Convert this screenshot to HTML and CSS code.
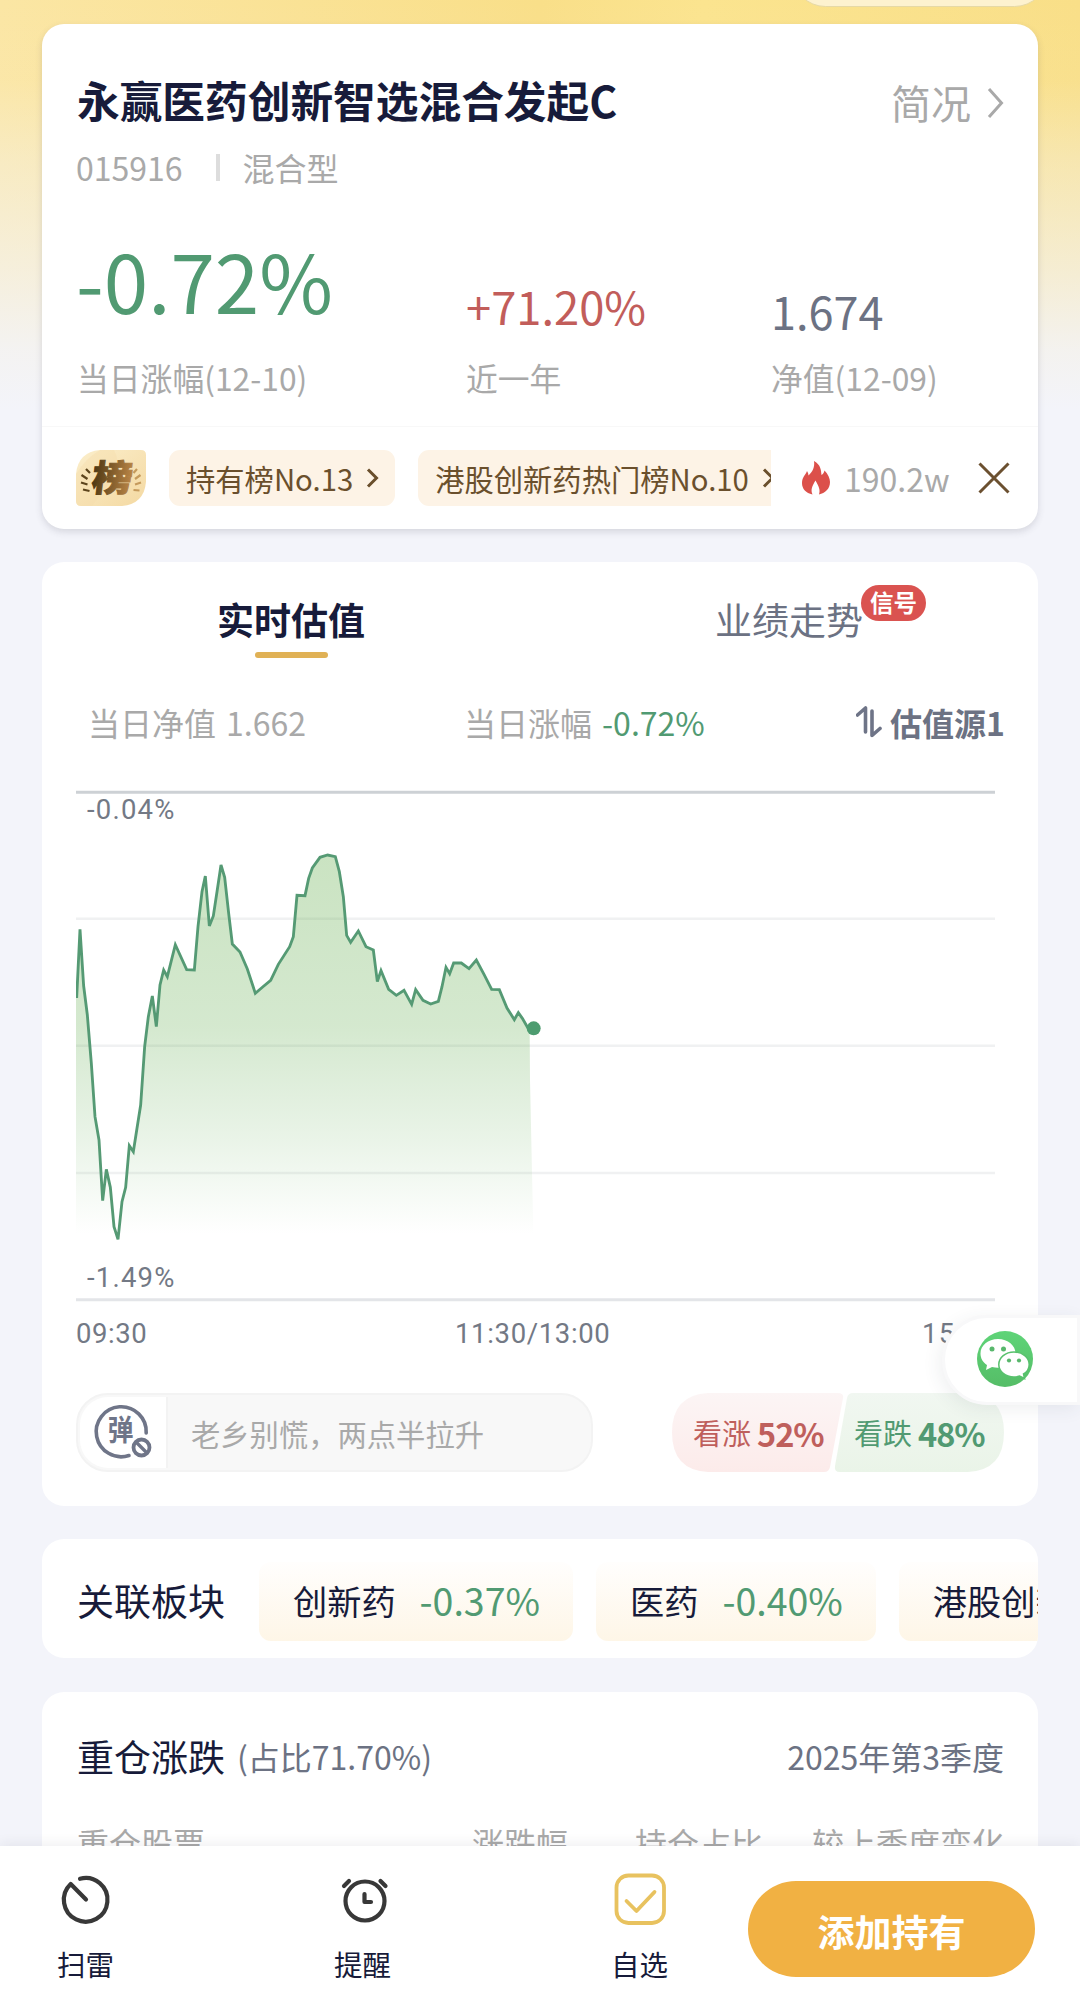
FILE: index.html
```html
<!DOCTYPE html>
<html lang="zh-CN">
<head>
<meta charset="utf-8">
<title>永赢医药创新智选混合发起C</title>
<link rel="stylesheet" href="styles.css">
</head>
<body>
<div class="top-pill"></div>
<main class="page">
  <section class="card summary">
    <header class="title-row">
      <h1 class="title">永赢医药创新智选混合发起C</h1>
      <div class="brief">简况
        <svg class="brief-arrow" width="17" height="32" viewBox="0 0 17 32"><path d="M2 2 L14.5 16 L2 30" fill="none" stroke="#a9a9a9" stroke-width="3"/></svg>
      </div>
    </header>
    <div class="meta"><span>015916</span><i class="meta-sep"></i><span>混合型</span></div>
    <div class="stats">
      <div class="stat"><div class="value big green">-0.72%</div><div class="label">当日涨幅(12-10)</div></div>
      <div class="stat"><div class="value year red">+71.20%</div><div class="label">近一年</div></div>
      <div class="stat"><div class="value nav">1.674</div><div class="label">净值(12-09)</div></div>
    </div>
    <div class="ranks">
      <div class="rank-badge">
        <svg width="70" height="56" viewBox="0 0 70 56">
          <defs>
            <linearGradient id="gold" x1="0" y1="0" x2="1" y2="1"><stop offset="0" stop-color="#fbeecb"/><stop offset="1" stop-color="#f4d9a2"/></linearGradient>
            <linearGradient id="bronze" x1="0" y1="0" x2="1" y2="0"><stop offset="0" stop-color="#4d3712"/><stop offset="1" stop-color="#bb8647"/></linearGradient>
          </defs>
          <path d="M24 0H65Q70 0 70 5V32Q68 54 46 56H5Q0 56 0 51V24Q2 2 24 0Z" fill="url(#gold)"/>
          <path d="M24 0H38Q44 10 40 24L16 56H5Q0 56 0 51V24Q10 8 24 0Z" fill="#f6dda9" opacity=".4"/>
          <path d="M10 19l4 4M5.500 25l6 4M5 32.500l6.500 2M7 39.500l6.500 1.500" stroke="#5c441c" stroke-width="2.2" fill="none"/>
          <path d="M61 19l-3.500 4M64.500 25l-5.500 4M65 32.500l-6 2M63.500 40.500l-6-.5" stroke="#c59a5c" stroke-width="2.2" fill="none"/>
          <text x="0" y="0" text-anchor="middle" class="badge-char" fill="url(#bronze)" stroke="url(#bronze)" transform="translate(35 40.500) skewX(-7) scale(1.12 1)">榜</text>
        </svg>
      </div>
      <div class="rank-list">
        <span class="rank-chip">持有榜No.13<svg width="13" height="20" viewBox="0 0 13 20"><path d="M2 1.5L10.5 10L2 18.5" fill="none" stroke="#6a4f2c" stroke-width="3"/></svg></span>
        <span class="rank-chip">港股创新药热门榜No.10<svg width="13" height="20" viewBox="0 0 13 20"><path d="M2 1.5L10.5 10L2 18.5" fill="none" stroke="#6a4f2c" stroke-width="3"/></svg></span>
      </div>
      <svg class="flame" width="30" height="34" viewBox="0 0 30 34"><path d="M13 0C20 4 20 9 20.500 14C22 13.500 23 11.500 23.500 9.500C27 13 29 17.500 29 21C29 28 24 32 18 33.500C19.500 29 18 26 14.500 19.500C11 25 9.500 29 11.500 33.500C5 32 1 28 1 22C1 16 5 13.500 6 10C7 11.500 7.500 13 7.500 14.500C11.500 11 14 6 13 0Z" fill="#dc504a"/></svg>
      <span class="heat">190.2w</span>
      <svg class="close" width="32" height="32" viewBox="0 0 32 32"><path d="M1.500 1.500L30.500 30.500M30.500 1.500L1.500 30.500" stroke="#6b5030" stroke-width="3"/></svg>
    </div>
  </section>

  <section class="card estimate">
    <nav class="tabs">
      <div class="tab active">实时估值<i class="tab-line"></i></div>
      <div class="tab"><span class="tab-text">业绩走势<b class="signal">信号</b></span></div>
    </nav>
    <div class="info">
      <div class="pair"><span>当日净值</span><span>1.662</span></div>
      <div class="pair"><span>当日涨幅</span><span class="green">-0.72%</span></div>
      <div class="source">
        <svg width="26" height="32" viewBox="0 0 26 32"><path d="M1.500 9L9.500 2V26M16 5V29.500L24 22.500" fill="none" stroke="#6e7487" stroke-width="3.600" stroke-linejoin="round" stroke-linecap="round"/></svg>估值源1
      </div>
    </div>
    <svg class="chart" width="919" height="580" viewBox="0 0 919 580">
      <defs><linearGradient id="area" gradientUnits="userSpaceOnUse" x1="0" y1="225" x2="0" y2="1362"><stop offset="0" stop-color="#5aa840" stop-opacity=".32"/><stop offset=".45" stop-color="#5aa845" stop-opacity=".26"/><stop offset=".75" stop-color="#5aa84c" stop-opacity=".13"/><stop offset="1" stop-color="#5aa850" stop-opacity="0"/></linearGradient></defs>
      <path d="M0 138.700H919M0 265.700H919M0 393H919" stroke="#f0f1f2" stroke-width="2.500"/>
      <path d="M0 12.300H919" stroke="#cdd1d5" stroke-width="3"/>
      <path d="M0 519.700H919" stroke="#e3e5e8" stroke-width="3"/>
      <g transform="scale(.333333) translate(-48 0)">
        <path fill="url(#area)" d="M48 654L60 448 71 618 82 705 94 850 105 1010 117 1080 128 1262 139 1168 151 1222 162 1340 174 1378 186 1265 197 1222 208 1097 220 1115 231 1045 242 975 254 800 265 710 277 648 289 740 300 615 311 570 322 590 346 494 380 569 403 570 414 440 426 335 436 288 448 438 460 408 471 335 483 255 494 292 506 400 517 492 540 516 562 567 586 640 608 621 632 601 655 553 689 500 700 470 711 346 735 347 746 295 757 264 780 232 803 225 826 230 838 275 850 350 860 466 872 487 895 453 918 500 940 510 952 605 963 572 986 628 1009 646 1032 631 1055 673 1067 629 1089 661 1112 672 1135 664 1146 620 1158 562 1169 581 1181 549 1204 549 1227 566 1249 540 1272 583 1295 628 1318 629 1341 684 1363 719 1375 698 1387 715 1409 750 1410 900 1420 1362H48Z"/>
        <path fill="none" stroke="#559a74" stroke-width="8.500" d="M50 654L60 448 71 618 82 705 94 850 105 1010 117 1080 128 1262 139 1168 151 1222 162 1340 174 1378 186 1265 197 1222 208 1097 220 1115 231 1045 242 975 254 800 265 710 277 648 289 740 300 615 311 570 322 590 346 494 380 569 403 570 414 440 426 335 436 288 448 438 460 408 471 335 483 255 494 292 506 400 517 492 540 516 562 567 586 640 608 621 632 601 655 553 689 500 700 470 711 346 735 347 746 295 757 264 780 232 803 225 826 230 838 275 850 350 860 466 872 487 895 453 918 500 940 510 952 605 963 572 986 628 1009 646 1032 631 1055 673 1067 629 1089 661 1112 672 1135 664 1146 620 1158 562 1169 581 1181 549 1204 549 1227 566 1249 540 1272 583 1295 628 1318 629 1341 684 1363 719 1375 698 1387 715 1402 741 1418 745"/>
        <circle cx="1421" cy="745" r="21" fill="#4d9c70"/>
      </g>
      <g class="axis">
        <text x="11" y="39">-0.04%</text>
        <text x="11" y="507">-1.49%</text>
        <text x="0" y="563" textLength="72">09:30</text>
        <text x="379" y="563" textLength="156">11:30/13:00</text>
        <text x="846" y="563">15:00</text>
      </g>
    </svg>
    <div class="votes">
      <div class="danmaku">
        <div class="danmaku-icon">
          <svg width="62" height="62" viewBox="0 0 62 62">
            <path d="M56.200 32A25 25 0 1 0 39 54.500" fill="none" stroke="#6f7588" stroke-width="3.600" stroke-linecap="round"/>
            <text x="0" y="0" text-anchor="middle" class="dan-char" transform="translate(30.500 40) scale(.95 1.08)">弹</text>
            <circle cx="51.500" cy="46.500" r="8" fill="#fff" stroke="#6f7588" stroke-width="3.800"/>
            <path d="M46 41L57 52" stroke="#6f7588" stroke-width="3.400"/>
          </svg>
        </div>
        <span class="danmaku-text">老乡别慌，两点半拉升</span>
      </div>
      <div class="poll">
        <svg class="poll-bg" width="332" height="79" viewBox="0 0 332 79">
          <defs>
            <linearGradient id="up" x1="0" y1="0" x2="0" y2="1"><stop offset="0" stop-color="#fcf5f5"/><stop offset="1" stop-color="#fcebea"/></linearGradient>
            <linearGradient id="down" x1="0" y1="0" x2="0" y2="1"><stop offset="0" stop-color="#f1f7f1"/><stop offset="1" stop-color="#eaf4e8"/></linearGradient>
          </defs>
          <path d="M36 0H166Q172 0 171 5L158 74Q157 79 152 79H36Q0 77 0 39.500Q0 2 36 0Z" fill="url(#up)"/>
          <path d="M181 0H296Q332 2 332 39.500Q332 77 296 79H168Q162 79 163 73L175 5Q176 0 181 0Z" fill="url(#down)"/>
        </svg>
        <span class="poll-item up">看涨<b>52%</b></span>
        <span class="poll-item down">看跌<b>48%</b></span>
      </div>
    </div>
  </section>

  <section class="card sectors">
    <h2 class="heading">关联板块</h2>
    <div class="sector-chip">创新药<span class="green">-0.37%</span></div>
    <div class="sector-chip">医药<span class="green">-0.40%</span></div>
    <div class="sector-chip">港股创新药</div>
  </section>

  <section class="card holdings">
    <div class="holdings-head">
      <h2 class="heading">重仓涨跌</h2><span class="ratio">(占比71.70%)</span><span class="quarter">2025年第3季度</span>
    </div>
    <div class="columns"><span>重仓股票</span><span>涨跌幅</span><span>持仓占比</span><span>较上季度变化</span></div>
  </section>
</main>

<aside class="share">
  <svg width="56" height="56" viewBox="0 0 56 56">
    <defs><linearGradient id="wx" x1="0" y1="0" x2="0" y2="1"><stop offset="0" stop-color="#5fd478"/><stop offset="1" stop-color="#55bd67"/></linearGradient></defs>
    <circle cx="28" cy="28" r="28" fill="url(#wx)"/>
    <path d="M21 8C11 8 3.500 14.500 3.500 22.500C3.500 27.500 6 31.500 10 34L9 39L15 36C17 36.500 19 36.800 21 36.800C31 36.800 38.500 30.500 38.500 22.500S31 8 21 8Z" fill="#fff"/>
    <path d="M37 21C28.500 21 21.800 26.500 21.800 33.500S28.500 46 37 46C39 46 41 45.600 42.600 45L47.500 47.500L46.500 43C50 41 52.200 37.500 52.200 33.500C52.200 26.500 45.500 21 37 21Z" fill="#fff" stroke="#58c16d" stroke-width="1.500"/>
    <circle cx="15" cy="18" r="2.500" fill="#58b76c"/><circle cx="26.500" cy="18" r="2.500" fill="#58b76c"/>
    <circle cx="32" cy="29.500" r="2.100" fill="#58b76c"/><circle cx="42" cy="29.500" r="2.100" fill="#58b76c"/>
  </svg>
</aside>

<footer class="bottom-bar">
  <div class="action">
    <svg width="56" height="56" viewBox="0 0 56 56"><path d="M22 7.800A21.800 21.800 0 1 1 12.700 13L28 28.500" fill="none" stroke="#383838" stroke-width="4.200" stroke-linecap="round" stroke-linejoin="round"/></svg>
    <span>扫雷</span>
  </div>
  <div class="action">
    <svg width="56" height="56" viewBox="0 0 56 56"><g fill="none" stroke="#383838" stroke-width="4.200" stroke-linecap="round" stroke-linejoin="round"><circle cx="30" cy="30" r="19.500"/><path d="M29.500 23V31H36M9 15L14 10M45.500 10L50.500 15"/></g></svg>
    <span>提醒</span>
  </div>
  <div class="action">
    <svg width="56" height="56" viewBox="0 0 56 56"><g fill="none" stroke="#e8c25f" stroke-width="3.800" stroke-linejoin="round" stroke-linecap="round"><rect x="4.500" y="4.500" width="47.500" height="47.500" rx="12"/><path d="M14.500 30L24.500 40L42.500 21"/></g></svg>
    <span>自选</span>
  </div>
  <button class="add">添加持有</button>
</footer>
</body>
</html>
```
FILE: styles.css
```css
* { box-sizing: border-box; }
body {
  margin: 0;
  height: 2011px;
  overflow: hidden;
  position: relative;
  font-family: "Noto Sans CJK SC", sans-serif;
  font-size: 32px;
  color: #a9a9a9;
  white-space: nowrap;
  background:
    linear-gradient(180deg, rgba(243,244,250,0) 0, rgba(243,244,250,.05) 80px, rgba(243,244,250,.35) 160px, rgba(243,244,250,.65) 270px, rgba(243,244,250,.9) 350px, #f3f4fa 410px),
    linear-gradient(90deg, #fbe6a4 0, #f9df89 50%, #fbe48f 65%, #f9df88 100%);
}
h1, h2 { margin: 0; font-weight: 400; }
.green { color: #519a72; }
.red { color: #c25d5a; }
.top-pill {
  position: absolute;
  left: 792px;
  top: -60px;
  width: 256px;
  height: 67px;
  border-radius: 34px;
  background: #fdf2cf;
  border: 1px solid #e6d9a6;
}
.page { padding: 24px 42px 0; height: 1846px; overflow: hidden; display: flex; flex-direction: column; }
.card { flex: none; background: #fff; border-radius: 22px; margin-bottom: 33px; }

.summary { height: 505px; padding-top: 46px; box-shadow: 0 3px 7px rgba(60,60,80,.16); }
.title-row { display: flex; justify-content: space-between; padding: 0 34px 0 35px; height: 58px; line-height: 58px; }
.title { font-size: 42.7px; font-weight: 700; color: #171b3a; }
.brief { display: flex; align-items: center; gap: 16px; font-size: 40px; padding-top: 5px; }
.brief-arrow { position: relative; top: 1px; }
.meta { display: flex; align-items: center; height: 46px; line-height: 46px; margin-top: 16px; padding-left: 34px; }
.meta-sep { width: 4px; height: 27px; background: #ddd; margin: 0 23px 0 33px; }
.stats { display: grid; grid-template-columns: 389px 305px 1fr; height: 172px; margin-top: 38px; padding-left: 35px; }
.stat { display: flex; flex-direction: column; justify-content: flex-end; }
.label { line-height: 46px; font-size: 31.8px; }
.big { font-size: 80px; line-height: 100px; margin: 0 0 25px -1px; }
.year { font-size: 45.3px; line-height: 60px; margin-bottom: 19px; }
.nav { font-size: 45px; line-height: 60px; margin-bottom: 13px; color: #6c7283; }
.ranks { display: flex; align-items: center; height: 103px; margin-top: 26px; padding: 0 27px 0 34px; border-top: 1px solid #f8f8f8; }
.rank-badge { height: 56px; width: 70px; }
.rank-badge svg { display: block; }
.badge-char { font-size: 36px; font-weight: 900; stroke-width: 1px; }
.rank-list { display: flex; gap: 23px; margin-left: 23px; width: 602px; overflow: hidden; }
.rank-chip { flex: none; display: flex; align-items: center; gap: 13px; height: 56px; padding: 0 16px 0 17px; border-radius: 11px; background: #fdf3e6; color: #6a4f2c; font-size: 29.3px; }
.flame { margin-left: 30px; }
.heat { margin-left: 13px; width: 119px; }
.close { margin-left: 15px; }

.estimate { height: 944px; padding-top: 30px; }
.tabs { display: grid; grid-template-columns: 1fr 1fr; height: 67px; }
.tab { display: flex; flex-direction: column; align-items: center; font-size: 37px; line-height: 54px; color: #6c7283; }
.active { color: #171b3a; font-weight: 700; }
.tab-line { width: 73px; height: 6px; border-radius: 3px; background: #e0b155; margin-top: 6px; }
.tab-text { position: relative; }
.signal { position: absolute; left: 100%; top: -7px; margin-left: -2px; width: 65px; height: 36px; border-radius: 18px; background: #da5350; color: #fff; font-size: 23.5px; line-height: 35px; text-align: center; }
.info { display: flex; height: 46px; line-height: 46px; margin-top: 40px; padding: 0 33px 0 46px; }
.pair { display: flex; gap: 10px; width: 376px; }
.source { display: flex; align-items: center; gap: 8px; margin-left: auto; font-weight: 700; color: #6c7283; }
.chart { display: block; margin: 35px 0 0 34px; }
.axis { font-family: Roboto, sans-serif; font-size: 27.5px; fill: #737985; letter-spacing: 1.2px; }
.votes { display: flex; justify-content: space-between; margin-top: 33px; padding: 0 34px; height: 79px; }
.danmaku { display: flex; width: 517px; border: 2px solid #f3f3f3; border-radius: 32px; background: #f8f8f8; align-items: center; }
.danmaku-icon { width: 88px; height: 71px; margin-left: 2px; border-radius: 28px 0 0 28px; background: #fff; border-right: 2px solid #f3f3f3; padding: 4px 0 0 10px; }
.dan-char { font-size: 27px; font-weight: 700; fill: #6f7588; }
.danmaku-text { font-size: 29.3px; margin-left: 23px; }
.poll { display: grid; grid-template-columns: 160px 172px; width: 332px; }
.poll-bg { grid-area: 1 / 1 / 2 / 3; }
.poll-item { display: flex; align-items: center; gap: 6px; font-size: 29px; line-height: 79px; }
.poll-item b { font-size: 32.500px; letter-spacing: -1px; }
.up { grid-area: 1 / 1; padding-left: 21px; color: #bf5f5c; }
.down { grid-area: 1 / 2; padding-left: 22px; color: #519a72; }

.sectors { display: flex; align-items: center; height: 119px; padding: 0 0 0 35px; overflow: hidden; }
.heading { font-size: 37px; color: #171b3a; }
.sectors .heading { padding-top: 2px; }
.sector-chip { flex: none; display: flex; align-items: center; gap: 24px; margin: 6px 0 0 23px; height: 79px; padding: 0 33px 4px 34px; border-radius: 12px; background: linear-gradient(#fffefd, #fef6e7); color: #171b3a; font-size: 34.2px; }
.sector-chip .green { font-size: 37.500px; }
.heading + .sector-chip { margin-left: 34px; }

.holdings { height: 400px; padding: 37px 34px 0 35px; margin-top: 1px; }
.holdings-head { display: flex; align-items: center; height: 54px; color: #6c7283; }
.ratio { margin-left: 12px; }
.quarter { margin-left: auto; }
.columns { display: flex; margin-top: 36px; line-height: 46px; }
.columns span:nth-child(2) { margin-left: 267px; }
.columns span:nth-child(3) { margin-left: 67px; }
.columns span:last-child { margin-left: auto; }

.share { position: absolute; left: 942px; top: 1315px; width: 138px; height: 90px; border: 3px solid #f8f8f9; border-radius: 45px 0 0 45px; background: #fff; box-shadow: -3px 4px 18px rgba(50,60,80,.08); padding: 13px 0 0 32px; }
.share svg { display: block; }

.bottom-bar { position: absolute; left: 0; right: 0; bottom: 0; height: 165px; background: #fff; box-shadow: 0 -2px 12px rgba(40,40,60,.08); display: flex; }
.action { width: 277px; padding-top: 25px; display: flex; flex-direction: column; font-size: 28.5px; line-height: 42px; color: #171b3a; }
.action svg { margin-left: 58px; }
.action span { width: 171px; text-align: center; margin-top: 16px; }
.action:nth-child(3) { width: 194px; }
.add { width: 287px; height: 96px; margin-top: 35px; border: 0; padding: 4px 0 0; border-radius: 48px; background: #f1b143; color: #fff; font: 700 37px/1 "Noto Sans CJK SC", sans-serif; }
```
